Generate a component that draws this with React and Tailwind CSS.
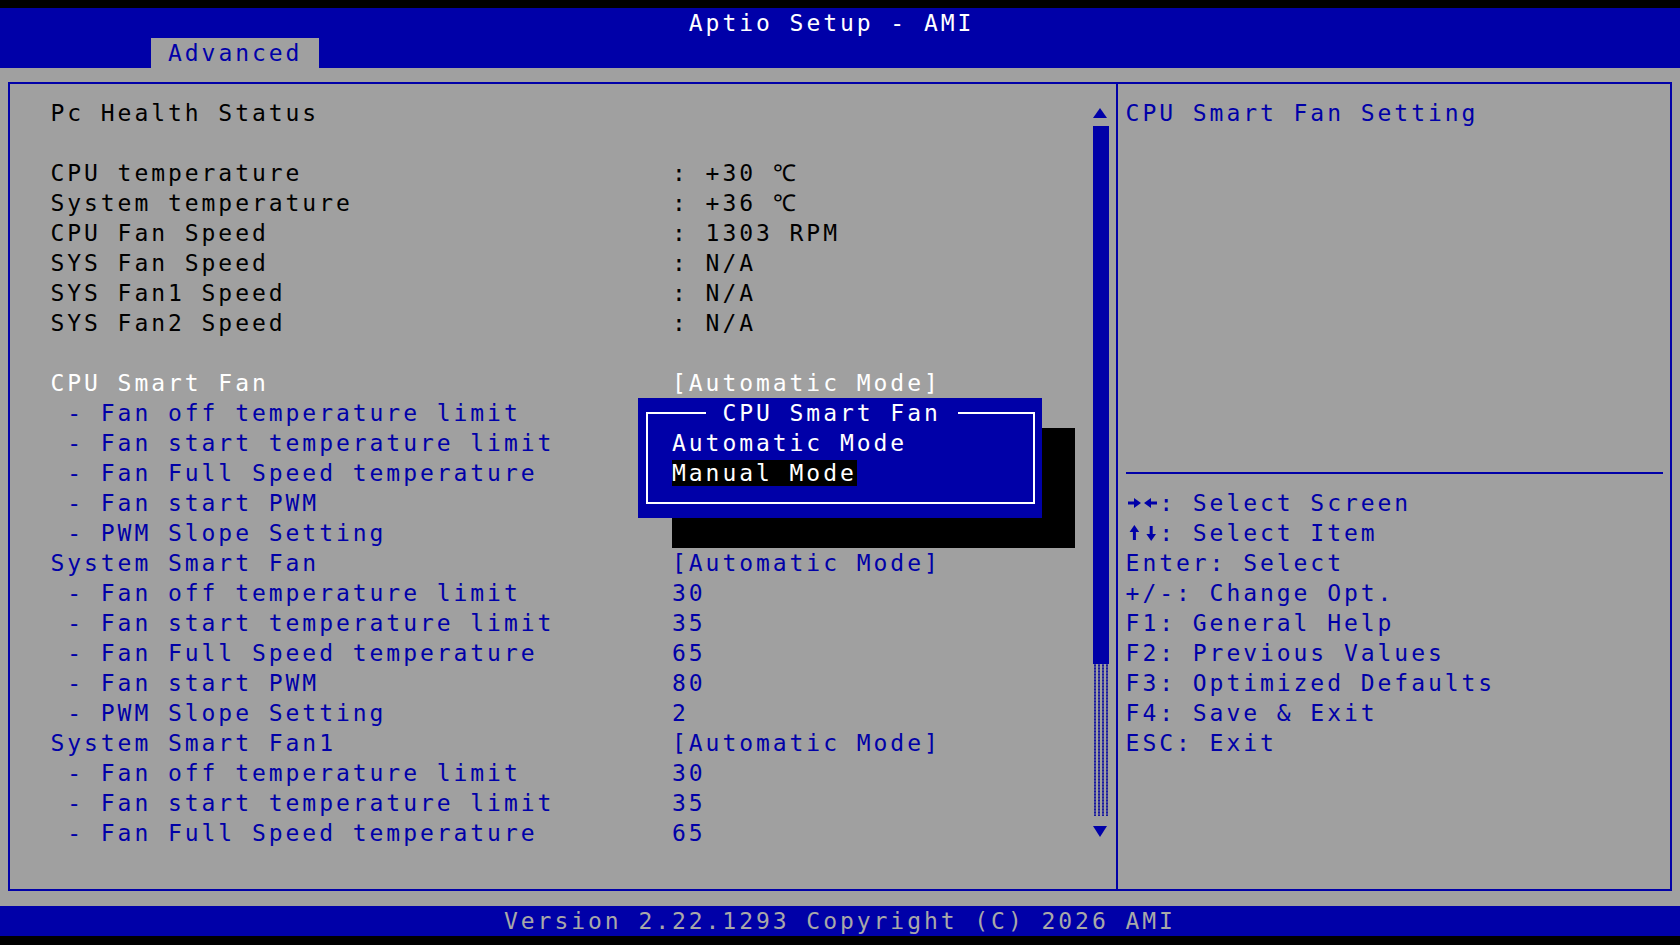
import React from "react";

const leftRows = [
  { label: "Pc Health Status", tone: "k" },
  {},
  { label: "CPU temperature", value: ": +30 ℃", tone: "k" },
  { label: "System temperature", value: ": +36 ℃", tone: "k" },
  { label: "CPU Fan Speed", value: ": 1303 RPM", tone: "k" },
  { label: "SYS Fan Speed", value: ": N/A", tone: "k" },
  { label: "SYS Fan1 Speed", value: ": N/A", tone: "k" },
  { label: "SYS Fan2 Speed", value: ": N/A", tone: "k" },
  {},
  { label: "CPU Smart Fan", value: "[Automatic Mode]", tone: "w" },
  { label: " - Fan off temperature limit", tone: "b" },
  { label: " - Fan start temperature limit", tone: "b" },
  { label: " - Fan Full Speed temperature", tone: "b" },
  { label: " - Fan start PWM", tone: "b" },
  { label: " - PWM Slope Setting", tone: "b" },
  { label: "System Smart Fan", value: "[Automatic Mode]", tone: "b" },
  { label: " - Fan off temperature limit", value: "30", tone: "b" },
  { label: " - Fan start temperature limit", value: "35", tone: "b" },
  { label: " - Fan Full Speed temperature", value: "65", tone: "b" },
  { label: " - Fan start PWM", value: "80", tone: "b" },
  { label: " - PWM Slope Setting", value: "2", tone: "b" },
  { label: "System Smart Fan1", value: "[Automatic Mode]", tone: "b" },
  { label: " - Fan off temperature limit", value: "30", tone: "b" },
  { label: " - Fan start temperature limit", value: "35", tone: "b" },
  { label: " - Fan Full Speed temperature", value: "65", tone: "b" },
];

const tones = {
  k: "text-black",
  w: "text-white",
  b: "text-[#0000a8]",
};

// arrow glyphs of the help list, drawn the way the BIOS bitmap font shows them
const LeftRight = () => (
  <svg width="33.6" height="30" viewBox="0 0 33.6 30" className="shrink-0">
    <rect x="2" y="13.5" width="7" height="3" fill="#0000a8" />
    <polygon points="8,10 15,15 8,20" fill="#0000a8" />
    <polygon points="18,15 25,10 25,20" fill="#0000a8" />
    <rect x="24" y="13.5" width="7" height="3" fill="#0000a8" />
  </svg>
);

const UpDown = () => (
  <svg width="33.6" height="30" viewBox="0 0 33.6 30" className="shrink-0">
    <polygon points="8.4,7 3.6,14 13.2,14" fill="#0000a8" />
    <rect x="6.9" y="13" width="3" height="9" fill="#0000a8" />
    <rect x="23.7" y="8" width="3" height="9" fill="#0000a8" />
    <polygon points="20.4,16 30,16 25.2,23" fill="#0000a8" />
  </svg>
);

const helpKeys = [
  [LeftRight, ": Select Screen"],
  [UpDown, ": Select Item"],
  [null, "Enter: Select"],
  [null, "+/-: Change Opt."],
  [null, "F1: General Help"],
  [null, "F2: Previous Values"],
  [null, "F3: Optimized Defaults"],
  [null, "F4: Save & Exit"],
  [null, "ESC: Exit"],
];

const Row = ({ label, value, tone }) => (
  <div className={`h-[30px] flex whitespace-pre ${tones[tone] || ""}`}>
    <span className="w-[621.6px] shrink-0">{label || ""}</span>
    <span>{value || ""}</span>
  </div>
);

const ScrollBar = () => (
  <div className="w-[16.8px] shrink-0 flex flex-col pt-[14px]">
    <div className="h-[30px] flex items-center justify-center">
      <svg width="14" height="10" viewBox="0 0 14 10">
        <polygon points="7,0 14,10 0,10" fill="#0000a8" />
      </svg>
    </div>
    <div className="h-[538px] mt-[-2px] ml-[1px] w-[16px] bg-[#0000a8]" />
    <div className="h-[152px] ml-[1px] w-[16px] bg-[radial-gradient(circle,#1818a0_40%,transparent_55%)] bg-[length:4px_3px]" />
    <div className="h-[30px] flex items-center justify-center">
      <svg width="14" height="11" viewBox="0 0 14 11">
        <polygon points="0,0 14,0 7,11" fill="#0000a8" />
      </svg>
    </div>
  </div>
);

const Popup = () => (
  <>
    <div className="absolute left-[672px] top-[428px] w-[403.2px] h-[120px] bg-black" />
    <div className="absolute left-[638.4px] top-[398px] w-[403.2px] h-[120px] bg-[#0000a8] pt-[30px] pl-[33.6px] text-white whitespace-pre">
      <div className="absolute left-[7.4px] top-[14px] w-[388.8px] h-[92px] border-2 border-white" />
      <div className="absolute left-[67.2px] top-0 h-[30px] bg-[#0000a8]">{" CPU Smart Fan "}</div>
      <div className="relative h-[30px]">Automatic Mode</div>
      <div className="relative h-[30px]">
        <span className="bg-black">Manual Mode</span>
      </div>
    </div>
  </>
);

export default function App() {
  return (
    <div className="relative w-[1680px] h-[945px] bg-black flex flex-col overflow-hidden font-['DejaVu_Sans_Mono',monospace] text-[23px] leading-[30px] tracking-[2.95px]">
      <div className="h-[8px] shrink-0" />

      <header className="h-[60px] shrink-0 bg-[#0000a8] flex flex-col">
        <div className="h-[30px] pl-[688.8px] text-white whitespace-pre">Aptio Setup - AMI</div>
        <div className="h-[30px] pl-[151.2px] flex">
          <div className="w-[168px] h-[30px] bg-[#a0a0a0] text-[#0000a8] pl-[16.8px]">Advanced</div>
        </div>
      </header>

      <main className="h-[838px] shrink-0 bg-[#a0a0a0] px-[8px] pt-[14px]">
        <div className="h-[809px] border-2 border-[#0000a8] flex">
          <section className="w-[1106px] shrink-0 flex">
            <div className="w-[1082px] shrink-0 flex flex-col pt-[14px] pl-[40.4px]">
              {leftRows.map((r, i) => (
                <Row key={i} {...r} />
              ))}
            </div>
            <ScrollBar />
          </section>

          <aside className="flex-1 border-l-2 border-[#0000a8] pl-[7.6px] pt-[14px] flex flex-col text-[#0000a8] whitespace-pre">
            <div className="h-[30px]">CPU Smart Fan Setting</div>
            <div className="h-[330px]" />
            <div className="h-[30px] flex items-center">
              <div className="w-[537.6px] h-[2px] bg-[#0000a8]" />
            </div>
            {helpKeys.map(([Icon, text], i) => (
              <div key={i} className="h-[30px] flex">
                {Icon && <Icon />}
                <span>{text}</span>
              </div>
            ))}
          </aside>
        </div>
      </main>

      <footer className="h-[30px] shrink-0 bg-[#0000a8] pl-[504px] text-[#a8a8a8] whitespace-pre">
        Version 2.22.1293 Copyright (C) 2026 AMI
      </footer>

      <Popup />
    </div>
  );
}
